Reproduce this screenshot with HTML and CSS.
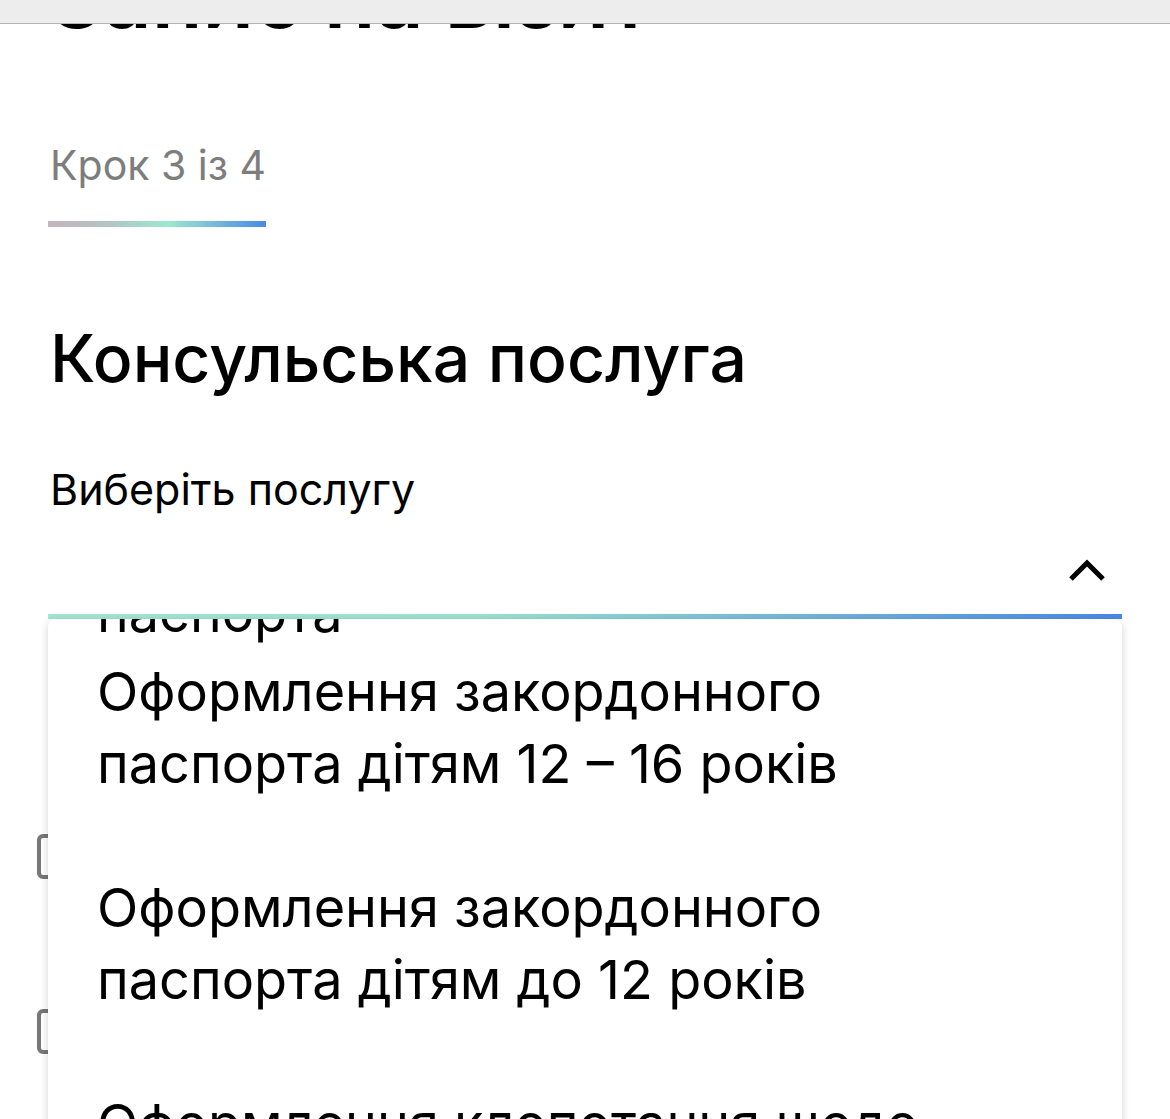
FILE: index.html
```html
<!DOCTYPE html>
<html lang="uk">
<head>
    <meta charset="utf-8">
    <title>Запис на візит</title>
    <link rel="stylesheet" href="styles.css">
</head>
<body>
    <div class="topbar"></div>

    <div class="page">
        <h1 class="title">Запис на візит</h1>

        <div class="step">Крок 3 із 4</div>
        <div class="step-bar"></div>

        <h2 class="section-title">Консульська послуга</h2>

        <label class="field-label">Виберіть послугу</label>

        <div class="select">
            <div class="select-box">
                <svg class="chevron" width="38" height="24" viewBox="0 0 38 24">
                    <polyline points="3,21 19,5 35,21" fill="none" stroke="#000" stroke-width="5"/>
                </svg>
            </div>

            <div class="dropdown">
                <ul class="options">
                    <li class="option partial">Оформлення закордонного паспорта</li>
                    <li class="option">Оформлення закордонного паспорта дітям 12 – 16 років</li>
                    <li class="option">Оформлення закордонного паспорта дітям до 12 років</li>
                    <li class="option">Оформлення клопотання щодо громадянства</li>
                </ul>
            </div>
        </div>

        <div class="checks">
            <div class="check-row"><span class="checkbox"></span></div>
            <div class="check-row"><span class="checkbox"></span></div>
        </div>
    </div>
</body>
</html>
```

FILE: styles.css
```css
body {
    margin: 0;
    background-color: #fff;
    color: #000;
    font-family: Inter, "Liberation Sans", Arial, sans-serif;
    overflow: hidden;
}

.topbar {
    position: fixed;
    top: 0;
    left: 0;
    right: 0;
    height: 23px;
    background-color: #ededed;
    border-bottom: 1px solid #b4b4b4;
    z-index: 10;
}

.page {
    padding: 0 48px;
}

.title {
    margin: -42px 0 0 2px;
    font-size: 84px;
    line-height: 80px;
    font-weight: 600;
}

.step {
    margin-top: 103px;
    margin-left: 2px;
    font-size: 41px;
    line-height: 48px;
    color: #7d7d7d;
}

.step-bar {
    margin-top: 32px;
    width: 218px;
    height: 6px;
    background: linear-gradient(to right, #c6b4bd 0%, #b1c7c2 30%, #9ce8cf 55%, #4a88ea 100%);
}

.section-title {
    margin: 95px 0 0 2px;
    font-size: 66px;
    line-height: 72px;
    font-weight: 500;
}

.field-label {
    display: block;
    margin: 71px 0 0 2px;
    font-size: 43px;
    line-height: 48px;
}

.select {
    position: relative;
}

.select-box {
    height: 106px;
    display: flex;
    justify-content: flex-end;
    align-items: center;
    padding-right: 16px;
    padding-top: 12px;
    box-sizing: border-box;
    border-bottom: 5px solid;
    border-image: linear-gradient(to right, #a3e6d2, #9ce3cf 40%, #4a88e6) 1;
}

.chevron {
    display: block;
}

.dropdown {
    position: absolute;
    top: 100%;
    left: 0;
    right: 0;
    height: 560px;
    overflow: hidden;
    background-color: #fff;
    border-radius: 8px 8px 0 0;
    box-shadow: 0 2px 8px rgba(0, 0, 0, 0.18);
    z-index: 5;
}

.options {
    list-style: none;
    margin: -114px 0 0;
    padding: 0 0 0 49px;
}

.option {
    max-width: 900px;
    padding: 36px 0;
    font-size: 54px;
    line-height: 72px;
}

.option.partial {
    padding: 0;
    margin-bottom: -29px;
}

.checks {
    margin-left: -11px;
    padding-top: 215px;
}

.check-row {
    height: 175px;
}

.checkbox {
    display: block;
    width: 37px;
    height: 37px;
    border: 4px solid #777;
    border-radius: 6px;
}
```
